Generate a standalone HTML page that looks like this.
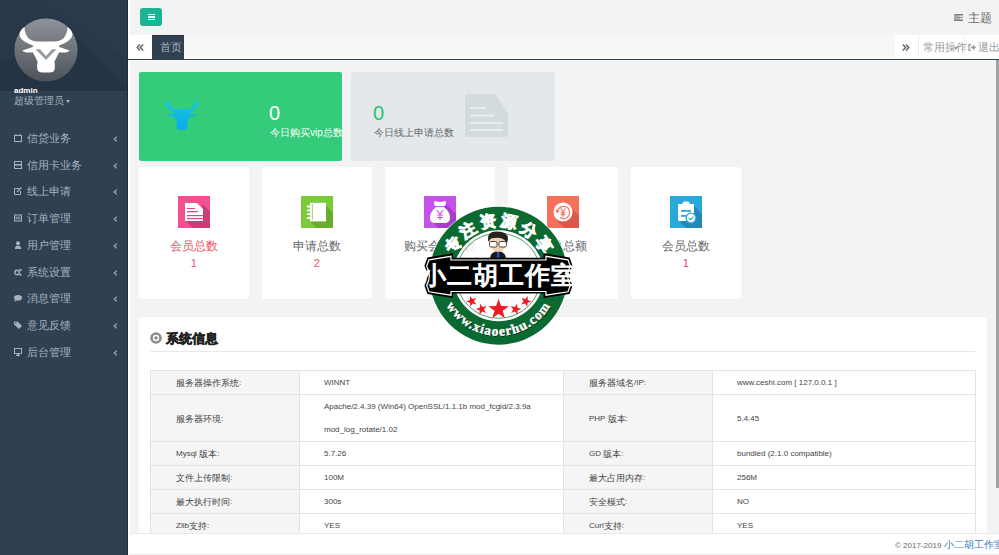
<!DOCTYPE html>
<html><head><meta charset="utf-8">
<style>
*{box-sizing:border-box;margin:0;padding:0}
html,body{width:999px;height:555px;overflow:hidden;background:#f3f3f4;font-family:"Liberation Sans",sans-serif;color:#676a6c}
.a{position:absolute;white-space:nowrap}
#side{position:absolute;left:0;top:0;width:128px;height:555px;background:#2f4050;border-right:1px solid #1f2d3b}
#nh{position:absolute;left:0;top:0;width:127px;height:91px;background:#273646;overflow:hidden}
.mi{position:absolute;left:0;width:127px;height:14px;color:#a7b1c2;font-size:10px;line-height:14px}
.mi .ic{position:absolute;left:14px;top:3px;width:8px;height:8px}
.mi .tx{position:absolute;left:27px;top:0}
.mi .ch{position:absolute;left:113px;top:5px}
#main{position:absolute;left:128px;top:0;width:871px;height:555px;background:#f3f3f4;border-left:2px solid #fff}
.card{position:absolute;top:167px;width:110.5px;height:132px;background:#fff;border-radius:3px}
.card .ico{position:absolute;left:39.25px;top:29px;width:32px;height:32px}
.card .lb{position:absolute;left:0;width:100%;top:72px;text-align:center;font-size:10px;line-height:14px;color:#676a6c}
.card .nm{position:absolute;left:0;width:100%;top:89px;text-align:center;font-size:11px;line-height:14px;color:#ed5565}
table{position:absolute;left:150px;top:370px;border-collapse:collapse;font-size:8px;color:#444}
td{border:1px solid #e3e3e3;height:24px;vertical-align:middle}
td.l{background:#f5f5f5;padding-left:25px}
td.v{background:#fff;padding-left:24px}
.c{line-height:1px}
.mi .c{font-size:10.8px;position:relative;top:1px}
.card .c{font-size:11.6px;position:relative;top:1px}
table .c{font-size:8.6px;position:relative;top:1px;letter-spacing:0}
.c11 .c{font-size:11px;position:relative;top:0.5px}
</style></head><body>
<div id="side">
  <div id="nh">
    <svg width="127" height="91" style="position:absolute;left:0;top:0">
      <rect width="127" height="91" fill="#283849"/>
      <polygon points="40,0 127,0 127,60" fill="#2a3a4c"/>
      <polygon points="72,34 127,86 127,91 0,91 0,62" fill="#243444"/>
    </svg>
    <svg width="64" height="64" style="position:absolute;left:14px;top:18px" viewBox="0 0 64 64">
      <defs><linearGradient id="ag" x1="0" y1="0" x2="0" y2="1"><stop offset="0" stop-color="#8e949a"/><stop offset="1" stop-color="#4d5358"/></linearGradient></defs>
      <circle cx="32" cy="32" r="31.6" fill="url(#ag)"/>
      <g transform="translate(4.5,10) scale(0.55,0.45)" fill="#fff"><path d="M11 -2 C 0 6, -3 22, 14 32 C 20 36, 26 38, 32 41 L 35 31 C 26 29, 20 26, 17 21 C 13 15, 11 8, 11 -2 Z"/><path d="M89 -2 C 100 6, 103 22, 86 32 C 80 36, 74 38, 68 41 L 65 31 C 74 29, 80 26, 83 21 C 87 15, 89 8, 89 -2 Z"/><path d="M27 30 L73 30 L74 42 L93 50 Q89 56 74 54 L64 78 L36 78 L26 54 Q11 56 7 50 L26 42 Z"/><path d="M37 74 H63 Q66 74 66 80 V89 Q66 99 56 99 H44 Q34 99 34 89 V80 Q34 74 37 74 Z"/></g><g transform="translate(4.5,10) scale(0.55,0.45)"><path d="M31 47 L50 71 L69 47 L61 47 L50 62 L39 47 Z" fill="#7d8389" opacity=".8"/></g>
    </svg>
  </div>
  <div class="a" style="left:14px;top:84.5px;font-size:8px;font-weight:bold;color:#fff;line-height:12px">admin</div>
  <div class="a" style="left:14px;top:96px;font-size:10px;color:#a7b1c2;line-height:10px"><span class="c">超级管理员</span><span style="display:inline-block;width:0;height:0;border-left:2.5px solid transparent;border-right:2.5px solid transparent;border-top:3px solid #a7b1c2;margin-left:2px;vertical-align:middle"></span></div>

  <div class="mi" style="top:131px"><svg class="ic" viewBox="0 0 8 8"><rect x="0.5" y="1.5" width="7" height="6" fill="none" stroke="#a7b1c2"/><rect x="1.5" y="0" width="1" height="2" fill="#a7b1c2"/><rect x="5.5" y="0" width="1" height="2" fill="#a7b1c2"/></svg><span class="tx"><span class="c">信贷业务</span></span><svg class="ch" width="5" height="6" viewBox="0 0 5 6"><path d="M3.8 0.6 L1.2 3 L3.8 5.4" fill="none" stroke="#a7b1c2" stroke-width="1.1"/></svg></div>
  <div class="mi" style="top:158px"><svg class="ic" viewBox="0 0 8 8"><rect x="0.5" y="0.5" width="7" height="7" fill="none" stroke="#a7b1c2"/><rect x="0" y="3" width="8" height="1.5" fill="#a7b1c2"/></svg><span class="tx"><span class="c">信用卡业务</span></span><svg class="ch" width="5" height="6" viewBox="0 0 5 6"><path d="M3.8 0.6 L1.2 3 L3.8 5.4" fill="none" stroke="#a7b1c2" stroke-width="1.1"/></svg></div>
  <div class="mi" style="top:184px"><svg class="ic" viewBox="0 0 8 8"><path d="M0.5 1.5 H5 M0.5 1.5 V7.5 H6.5 V4" fill="none" stroke="#a7b1c2"/><path d="M3 5 L7.5 0.5" stroke="#a7b1c2" stroke-width="1.3"/></svg><span class="tx"><span class="c">线上申请</span></span><svg class="ch" width="5" height="6" viewBox="0 0 5 6"><path d="M3.8 0.6 L1.2 3 L3.8 5.4" fill="none" stroke="#a7b1c2" stroke-width="1.1"/></svg></div>
  <div class="mi" style="top:211px"><svg class="ic" viewBox="0 0 8 8"><rect x="0.5" y="1" width="7" height="6" fill="none" stroke="#a7b1c2"/><rect x="1.5" y="2.5" width="5" height="3" fill="#a7b1c2" opacity=".6"/></svg><span class="tx"><span class="c">订单管理</span></span><svg class="ch" width="5" height="6" viewBox="0 0 5 6"><path d="M3.8 0.6 L1.2 3 L3.8 5.4" fill="none" stroke="#a7b1c2" stroke-width="1.1"/></svg></div>
  <div class="mi" style="top:238px"><svg class="ic" viewBox="0 0 8 8"><circle cx="4" cy="2.3" r="2" fill="#a7b1c2"/><path d="M0.8 8 Q1 4.5 4 4.5 Q7 4.5 7.2 8 Z" fill="#a7b1c2"/></svg><span class="tx"><span class="c">用户管理</span></span><svg class="ch" width="5" height="6" viewBox="0 0 5 6"><path d="M3.8 0.6 L1.2 3 L3.8 5.4" fill="none" stroke="#a7b1c2" stroke-width="1.1"/></svg></div>
  <div class="mi" style="top:265px"><svg class="ic" viewBox="0 0 8 8"><circle cx="3" cy="4.5" r="2.2" fill="none" stroke="#a7b1c2" stroke-width="1.4"/><circle cx="6.5" cy="2" r="1.2" fill="#a7b1c2"/><circle cx="6.5" cy="6.8" r="1.1" fill="#a7b1c2"/></svg><span class="tx"><span class="c">系统设置</span></span><svg class="ch" width="5" height="6" viewBox="0 0 5 6"><path d="M3.8 0.6 L1.2 3 L3.8 5.4" fill="none" stroke="#a7b1c2" stroke-width="1.1"/></svg></div>
  <div class="mi" style="top:291px"><svg class="ic" viewBox="0 0 8 8"><ellipse cx="4" cy="3.8" rx="4" ry="2.8" fill="#a7b1c2"/><path d="M1 5.5 L0.5 8 L3 6" fill="#a7b1c2"/></svg><span class="tx"><span class="c">消息管理</span></span><svg class="ch" width="5" height="6" viewBox="0 0 5 6"><path d="M3.8 0.6 L1.2 3 L3.8 5.4" fill="none" stroke="#a7b1c2" stroke-width="1.1"/></svg></div>
  <div class="mi" style="top:318px"><svg class="ic" viewBox="0 0 8 8"><path d="M0 0.5 H3.5 L8 5 L5 8 L0 3.5 Z" fill="#a7b1c2"/><circle cx="1.8" cy="2" r="0.8" fill="#2f4050"/></svg><span class="tx"><span class="c">意见反馈</span></span><svg class="ch" width="5" height="6" viewBox="0 0 5 6"><path d="M3.8 0.6 L1.2 3 L3.8 5.4" fill="none" stroke="#a7b1c2" stroke-width="1.1"/></svg></div>
  <div class="mi" style="top:345px"><svg class="ic" viewBox="0 0 8 8"><rect x="0.5" y="0.5" width="7" height="5" fill="none" stroke="#a7b1c2"/><rect x="3" y="6" width="2" height="1" fill="#a7b1c2"/><rect x="2" y="7" width="4" height="1" fill="#a7b1c2"/></svg><span class="tx"><span class="c">后台管理</span></span><svg class="ch" width="5" height="6" viewBox="0 0 5 6"><path d="M3.8 0.6 L1.2 3 L3.8 5.4" fill="none" stroke="#a7b1c2" stroke-width="1.1"/></svg></div>
</div>

<div id="main">
</div>
<!-- header -->
<div class="a" style="left:130px;top:0;width:869px;height:35px;background:#f3f3f4"></div>
<div class="a" style="left:140px;top:8px;width:22px;height:18px;background:#1ab394;border-radius:3px">
  <div class="a" style="left:7.5px;top:5.6px;width:7.5px;height:1.3px;background:#fff"></div>
  <div class="a" style="left:7.5px;top:8.3px;width:7.5px;height:1.3px;background:#fff"></div>
  <div class="a" style="left:7.5px;top:11px;width:7.5px;height:1.3px;background:#fff"></div>
</div>
<svg class="a" style="left:954px;top:14px" width="9" height="7" viewBox="0 0 9 7"><rect x="0" y="0" width="9" height="1.4" fill="#777"/><rect x="0" y="2.8" width="9" height="1.4" fill="#999"/><rect x="0" y="5.6" width="9" height="1.4" fill="#777"/><rect x="0" y="0" width="6" height="7" fill="#888" opacity=".5"/></svg>
<div class="a c11" style="left:967.5px;top:12px;font-size:10px;line-height:12px;color:#676a6c"><span class="c" style="font-size:12px">主题</span></div>
<!-- tabs -->
<div class="a" style="left:130px;top:35px;width:869px;height:22px;background:#f7f7f7"></div>
<div class="a" style="left:130px;top:57px;width:869px;height:2px;background:#fff"></div>
<div class="a" style="left:130px;top:35px;width:22px;height:22px;background:#fff"></div>
<svg class="a" style="left:136px;top:44px" width="8" height="7" viewBox="0 0 8 7"><path d="M4 0.6 L1.2 3.5 L4 6.4 M7.2 0.6 L4.4 3.5 L7.2 6.4" fill="none" stroke="#666" stroke-width="1.5"/></svg>
<div class="a" style="left:152px;top:35px;width:32px;height:24px;background:#2f4050;border-top:1px solid #253342"></div>
<div class="a c11" style="left:160px;top:41px;font-size:10px;line-height:12px;color:#a7b1c2"><span class="c">首页</span></div>
<div class="a" style="left:895px;top:35px;width:104px;height:22px;background:#fff"></div>
<div class="a" style="left:918px;top:35px;width:1px;height:22px;background:#eee"></div>
<div class="a" style="left:964px;top:35px;width:1px;height:22px;background:#eee"></div>
<svg class="a" style="left:902px;top:44px" width="8" height="7" viewBox="0 0 8 7"><path d="M0.8 0.6 L3.6 3.5 L0.8 6.4 M4 0.6 L6.8 3.5 L4 6.4" fill="none" stroke="#666" stroke-width="1.5"/></svg>
<div class="a c11" style="left:923px;top:41px;font-size:10px;line-height:12px;color:#999"><span class="c">常用操作</span></div>
<div class="a" style="left:954px;top:46.5px;width:0;height:0;border-left:2.5px solid transparent;border-right:2.5px solid transparent;border-top:3px solid #999"></div>
<svg class="a" style="left:968px;top:43.5px" width="8" height="7" viewBox="0 0 8 7"><path d="M3 0.7 H1 V6.3 H3" fill="none" stroke="#999" stroke-width="1.2"/><path d="M3 2.5 H5 V0.8 L8 3.5 L5 6.2 V4.5 H3 Z" fill="#999"/></svg>
<div class="a c11" style="left:978px;top:41px;font-size:10px;line-height:12px;color:#999"><span class="c">退出</span></div>
<div class="a" style="left:128px;top:59px;width:871px;height:1px;background:#2f4050"></div>
<div class="a" style="left:130px;top:60px;width:869px;height:1px;background:#f8f8f8"></div>
<!-- scrollbar -->
<div class="a" style="left:994px;top:60px;width:5px;height:473px;background:#f4f4f4"></div>
<div class="a" style="left:996px;top:60px;width:3px;height:428px;background:#a1a1a1"></div>
<!-- top cards -->
<div class="a" style="left:139px;top:72px;width:203px;height:88.6px;background:#34cb7a;border-radius:2px"></div>
<svg class="a" style="left:164.5px;top:100.4px" width="34" height="30.1" viewBox="0 0 100 100" preserveAspectRatio="none">
  <defs><linearGradient id="bg2" gradientUnits="userSpaceOnUse" x1="0" y1="0" x2="0" y2="100"><stop offset="0" stop-color="#1cc8d2"/><stop offset="0.5" stop-color="#13b8e0"/><stop offset="1" stop-color="#0aabf2"/></linearGradient></defs>
  <g fill="url(#bg2)"><path d="M11 -2 C 0 6, -3 22, 14 32 C 20 36, 26 38, 32 41 L 35 31 C 26 29, 20 26, 17 21 C 13 15, 11 8, 11 -2 Z"/><path d="M89 -2 C 100 6, 103 22, 86 32 C 80 36, 74 38, 68 41 L 65 31 C 74 29, 80 26, 83 21 C 87 15, 89 8, 89 -2 Z"/><path d="M27 30 L73 30 L74 42 L93 50 Q89 56 74 54 L64 78 L36 78 L26 54 Q11 56 7 50 L26 42 Z"/><path d="M37 74 H63 Q66 74 66 80 V89 Q66 99 56 99 H44 Q34 99 34 89 V80 Q34 74 37 74 Z"/></g>
</svg>
<div class="a" style="left:269px;top:101.5px;font-size:20px;line-height:22px;color:#fff">0</div>
<div class="a" style="left:270px;top:126px;font-size:10px;line-height:13px;color:#fff"><span class="c">今日购买</span>vip<span class="c">总数</span></div>
<div class="a" style="left:351px;top:72px;width:204px;height:88.6px;background:#e3e8eb;border-radius:2px"></div>
<div class="a" style="left:373px;top:101.5px;font-size:20px;line-height:22px;color:#2bc26e">0</div>
<div class="a" style="left:374px;top:126px;font-size:10px;line-height:13px;color:#676a6c"><span class="c">今日线上申请总数</span></div>
<svg class="a" style="left:465px;top:94px" width="44" height="43" viewBox="0 0 44 43"><path d="M3 0 H30 L43 19 V40 Q43 43 40 43 H3 Q0 43 0 40 V3 Q0 0 3 0 Z" fill="#d3dbde"/><rect x="5" y="13" width="16" height="2" fill="#e9edef"/><rect x="5" y="20.5" width="24" height="2" fill="#e9edef"/><rect x="5" y="28" width="33" height="2" fill="#e9edef"/><rect x="5" y="35" width="33" height="2" fill="#e9edef"/></svg>
<!-- small cards -->
<div class="card" style="left:138.5px"><svg class="ico" viewBox="0 0 32 32"><rect width="32" height="32" fill="#f3508f"/><path d="M26 9 L32 16 V32 H15 L7 24 Z" fill="#c93c77"/><path d="M7 7 H19 L25 13 V24 Q25 25 24 25 H8 Q7 25 7 24 Z" fill="#fff"/><rect x="9" y="12" width="8" height="1" fill="#d94a84"/><rect x="9" y="15" width="11" height="1.2" fill="#d94a84"/><rect x="9" y="19" width="16" height="1.2" fill="#d94a84"/><rect x="9" y="22" width="16" height="1.2" fill="#d94a84"/></svg><div class="lb" style="color:#ed5565"><span class="c">会员总数</span></div><div class="nm">1</div></div>
<div class="card" style="left:261.5px"><svg class="ico" viewBox="0 0 32 32"><rect width="32" height="32" fill="#7ec93a"/><path d="M26 10 L32 17 V32 H15 L9 25 Z" fill="#68ad2b"/><rect x="9" y="6.8" width="16" height="18.6" fill="#fff"/><rect x="10.8" y="8" width="0.9" height="16.2" fill="#7ec93a"/><g fill="#fff"><rect x="5.6" y="9.6" width="5.6" height="1.8" rx=".9"/><rect x="5.6" y="13.4" width="5.6" height="1.8" rx=".9"/><rect x="5.6" y="17.2" width="5.6" height="1.8" rx=".9"/><rect x="5.6" y="21" width="5.6" height="1.8" rx=".9"/></g></svg><div class="lb"><span class="c">申请总数</span></div><div class="nm">2</div></div>
<div class="card" style="left:384.5px"><svg class="ico" viewBox="0 0 32 32"><rect width="32" height="32" fill="#c652ec"/><path d="M22 8 L32 18 V32 H14 L9 26 Z" fill="#a93ccd"/><path d="M11 5 Q16 7 21 5 Q23 6 21 10 H11 Q9 6 11 5 Z" fill="#fff"/><path d="M12 11 H20 Q27 17 26 23 Q25 27 21 27 H11 Q7 27 6 23 Q5 17 12 11 Z" fill="#fff"/><path d="M13 14 L16 18 L19 14 M16 18 V24 M13 19 H19 M13 21.5 H19" stroke="#c652ec" stroke-width="1.2" fill="none"/></svg><div class="lb"><span class="c">购买会员总数</span></div><div class="nm">0</div></div>
<div class="card" style="left:507.5px"><svg class="ico" viewBox="0 0 32 32"><rect width="32" height="32" fill="#f7705a"/><path d="M24 12 L32 20 V32 H17 L10 25 Z" fill="#d9584a"/><circle cx="16" cy="16" r="9.5" fill="#fff"/><path d="M10.6 14.6 A6.2 6.2 0 1 1 13 21.6" fill="none" stroke="#f7705a" stroke-width="1.2"/><polygon points="8.4,13.6 12.6,14.4 10,17.6" fill="#f7705a"/><path d="M13.6 12.4 L16 15.8 L18.4 12.4 M16 15.8 V21 M13.6 16.6 H18.4 M13.6 18.6 H18.4" stroke="#f7705a" stroke-width="1.1" fill="none"/></svg><div class="lb"><span class="c">订单总额</span></div><div class="nm">0</div></div>
<div class="card" style="left:630.5px"><svg class="ico" viewBox="0 0 32 32"><rect width="32" height="32" fill="#2aa8dc"/><path d="M24 10 L32 18 V32 H16 L10 26 Z" fill="#2189b8"/><path d="M9 8 H23 Q24 8 24 9 V24 Q24 25 23 25 H9 Q8 25 8 24 V9 Q8 8 9 8 Z" fill="#fff"/><rect x="12.5" y="5.5" width="7" height="4" rx="2" fill="#fff"/><rect x="11" y="14" width="10" height="1.8" fill="#2aa8dc"/><rect x="11" y="19" width="6" height="1.8" fill="#2aa8dc"/><circle cx="21" cy="22" r="5.5" fill="#2aa8dc"/><circle cx="21" cy="22" r="4.2" fill="#fff"/><path d="M18.8 22 L20.5 23.8 L23.5 20.6" stroke="#2aa8dc" stroke-width="1.2" fill="none"/></svg><div class="lb"><span class="c">会员总数</span></div><div class="nm" style="color:#e6397a">1</div></div>
<!-- panel -->
<div class="a" style="left:138.5px;top:317px;width:848px;height:260px;background:#fff;border-radius:3px"></div>
<svg class="a" style="left:150px;top:332px" width="12" height="12" viewBox="0 0 12 12"><circle cx="6" cy="6" r="5.8" fill="#8c8c8c"/><circle cx="6" cy="6" r="2.5" fill="none" stroke="#fff" stroke-width="1.4"/></svg>
<div class="a" style="left:165.5px;top:332px;font-size:12.5px;line-height:14px;font-weight:bold;color:#222;-webkit-text-stroke:0.5px #222"><span class="c">系统信息</span></div>
<div class="a" style="left:150px;top:351px;width:825px;height:1px;background:#e7eaec"></div>
<table>
<colgroup><col style="width:149px"><col style="width:264px"><col style="width:149px"><col style="width:263px"></colgroup>
<tr><td class="l"><span class="c">服务器操作系统</span>:</td><td class="v">WINNT</td><td class="l"><span class="c">服务器域名</span>/IP:</td><td class="v">www.ceshi.com [ 127.0.0.1 ]</td></tr>
<tr style="height:47.4px"><td class="l"><span class="c">服务器环境</span>:</td><td class="v" style="line-height:23px">Apache/2.4.39 (Win64) OpenSSL/1.1.1b mod_fcgid/2.3.9a<br>mod_log_rotate/1.02</td><td class="l">PHP <span class="c">版本</span>:</td><td class="v">5.4.45</td></tr>
<tr><td class="l">Mysql <span class="c">版本</span>:</td><td class="v">5.7.26</td><td class="l">GD <span class="c">版本</span>:</td><td class="v">bundled (2.1.0 compatible)</td></tr>
<tr><td class="l"><span class="c">文件上传限制</span>:</td><td class="v">100M</td><td class="l"><span class="c">最大占用内存</span>:</td><td class="v">256M</td></tr>
<tr><td class="l"><span class="c">最大执行时间</span>:</td><td class="v">300s</td><td class="l"><span class="c">安全模式</span>:</td><td class="v">NO</td></tr>
<tr><td class="l">Zlib<span class="c">支持</span>:</td><td class="v">YES</td><td class="l">Curl<span class="c">支持</span>:</td><td class="v">YES</td></tr>
</table>
<!-- footer -->
<div class="a" style="left:130px;top:554px;width:869px;height:1px;background:#ececec;z-index:1"></div>
<div class="a" style="left:130px;top:533px;width:869px;height:22px;background:#fff;border-top:1px solid #e7eaec"></div>
<div class="a" style="left:895px;top:539px;font-size:8px;line-height:11px;color:#676a6c">© 2017-2019 <span style="color:#337ab7;font-size:10px"><span class="c">小二胡工作室</span></span></div>
<!-- watermark -->
<svg class="a" style="left:415px;top:200px" width="170" height="150" viewBox="415 200 170 150">
<ellipse cx="498.5" cy="275.7" rx="69.8" ry="69.5" fill="#fff" opacity=".8"/>
<path d="M429.5,275.7 a69,69 0 1,0 138,0 a69,69 0 1,0 -138,0 Z M453.0,275.7 a45.5,45.5 0 1,0 91,0 a45.5,45.5 0 1,0 -91,0 Z" fill="#0b6a31" fill-rule="evenodd"/>
<circle cx="498.5" cy="275.7" r="45.5" fill="#fff" opacity=".3"/>
<circle cx="498.5" cy="275.7" r="42.6" fill="none" stroke="#2f7f4d" stroke-width="0.8"/>
<defs>
<path id="arcT" d="M 449 275.7 A 49.5 49.5 0 0 1 548 275.7"/>
<path id="arcB" d="M 438.5 275.7 A 60 60 0 0 0 558.5 275.7"/>
</defs>
<g transform="rotate(1.8 498.5 275.7)"><text font-family="Liberation Sans" font-size="16" font-weight="bold" fill="#fff" stroke="#fff" stroke-width="0.9" letter-spacing="3.2" text-anchor="middle"><textPath href="#arcT" startOffset="50%">专注资源分享</textPath></text></g>
<g transform="translate(0.7 0.7)"><text font-family="Liberation Serif" font-size="13.5" font-weight="bold" fill="#000" stroke="#000" stroke-width="0.6" opacity=".6" letter-spacing="1" text-anchor="middle"><textPath href="#arcB" startOffset="50%">www.xiaoerhu.com</textPath></text></g><text font-family="Liberation Serif" font-size="13.5" font-weight="bold" fill="#fff" stroke="#fff" stroke-width="0.4" letter-spacing="1" text-anchor="middle"><textPath href="#arcB" startOffset="50%">www.xiaoerhu.com</textPath></text>
<polygon points="498.6,298.7 501.1,306.0 508.9,306.2 502.7,310.8 504.9,318.2 498.6,313.8 492.3,318.2 494.5,310.8 488.3,306.2 496.1,306.0" fill="#f01c24"/><polygon points="480.1,303.7 482.4,307.1 486.5,306.1 483.9,309.4 486.1,313.0 482.2,311.5 479.5,314.7 479.7,310.6 475.8,309.0 479.8,307.8" fill="#f01c24"/><polygon points="517.1,303.7 517.4,307.8 521.4,309.0 517.5,310.6 517.7,314.7 515.0,311.5 511.1,313.0 513.3,309.4 510.7,306.1 514.8,307.1" fill="#f01c24"/><polygon points="469.9,296.0 472.4,299.1 476.2,297.9 474.0,301.2 476.4,304.4 472.6,303.4 470.3,306.7 470.0,302.7 466.2,301.5 469.9,300.0" fill="#f01c24"/><polygon points="527.7,296.0 527.7,300.0 531.4,301.5 527.6,302.7 527.3,306.7 525.0,303.4 521.2,304.4 523.6,301.2 521.4,297.9 525.2,299.1" fill="#f01c24"/>
<!-- cartoon -->
<path d="M490 259 Q490 252 498 251 Q506 252 506 259 Z" fill="#1a1a1a"/>
<path d="M497.2 252 L499.2 252 L499.6 259 L496.8 259 Z" fill="#2050c0"/>
<ellipse cx="498" cy="243.5" rx="8" ry="8.5" fill="#f2d3b6"/>
<path d="M488.5 242 Q486 232 496 231.5 Q508 231 508 239 L507 243 Q503 236 491 238.5 Z" fill="#2a211c"/>
<rect x="489.5" y="241.5" width="7.5" height="5.5" rx="1.5" fill="#fff" stroke="#222" stroke-width="0.8"/>
<rect x="499" y="241.5" width="7.5" height="5.5" rx="1.5" fill="#fff" stroke="#222" stroke-width="0.8"/>
<!-- banner -->
<path d="M427.4,257.4 L453,253.2 L453,257.8 L543.5,257.8 L543.5,253.2 L569.6,257.4 L572.6,265.8 Q567,275.7 572.6,285.6 L569.6,294 L543.5,298 L543.5,293.6 L453,293.6 L453,298 L427.4,294 L424.4,285.6 Q430,275.7 424.4,265.8 Z" fill="#000"/>
<path d="M429,259.8 L451,256.3 L451,260 L546,260 L546,256.3 L568,259.8 L570.3,266 Q565,275.7 570.3,285.4 L568,291.8 L546,295.2 L546,291.5 L451,291.5 L451,295.2 L429,291.8 L426.7,285.4 Q432,275.7 426.7,266 Z" fill="none" stroke="#fff" stroke-width="1.2"/>
<text x="499" y="284" font-family="Liberation Sans" font-size="25" fill="#fff" stroke="#fff" stroke-width="1.1" text-anchor="middle" letter-spacing="1">小二胡工作室</text>
</svg>
</body></html>
